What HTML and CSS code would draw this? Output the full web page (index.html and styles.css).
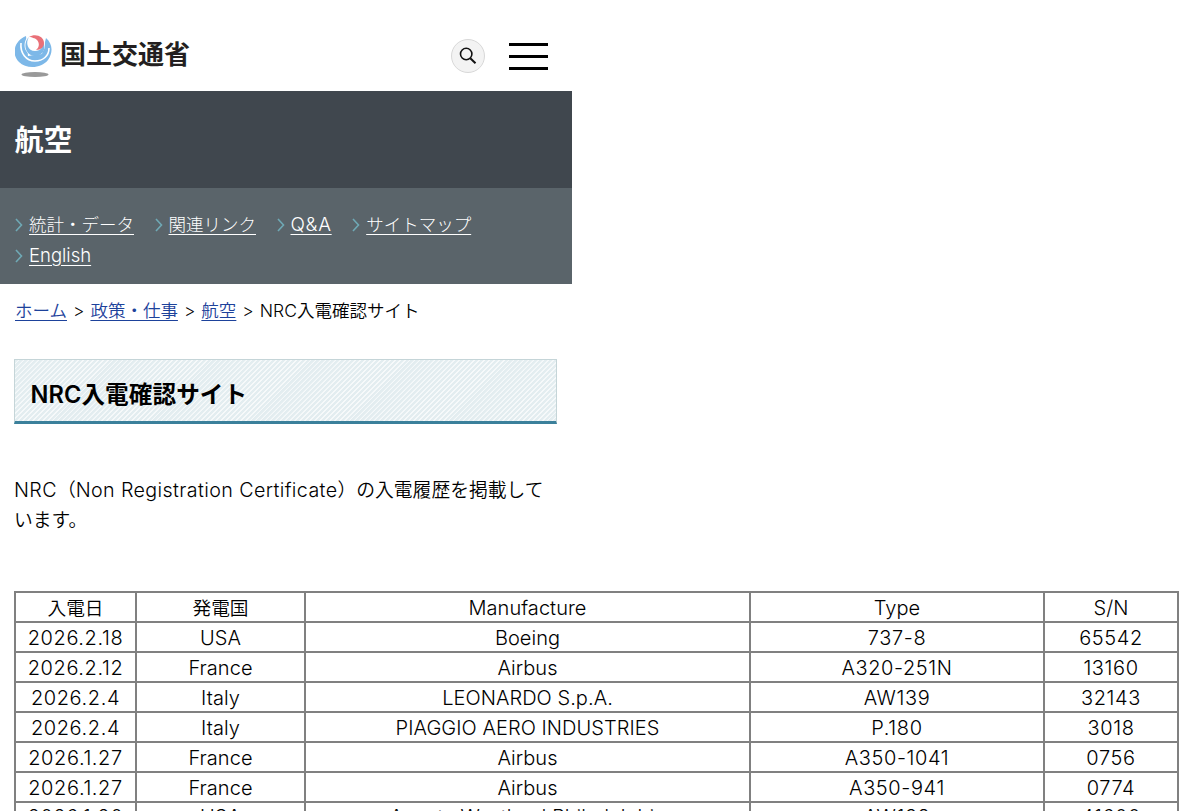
FILE: index.html
```html
<!DOCTYPE html>
<html lang="ja">
<head>
    <meta charset="UTF-8">
    <meta name="viewport" content="width=device-width, initial-scale=1.0">
    <title>航空:NRC入電確認サイト - 国土交通省</title>
    <link rel="stylesheet" href="styles.css">
</head>
<body>
    <div class="wrapper">
        <header class="header">
            <a class="logo" href="#">
                <svg class="logo-mark" width="38" height="44" viewBox="0 0 38 44">
                    <ellipse cx="20" cy="40.5" rx="13.5" ry="2.6" fill="#999"/>
                    <path d="M11 2C-1 7-4 20 4 28c7 7 22 7 29-2 5-7 5-16-2-22l-4 16-14 2Z" fill="#7db8e8"/>
                    <path d="M14 2C7 7 8 21 19 21c9 0 14-8 9-16-3-4-9-5-14-3Z" fill="#fff"/>
                    <path d="M14 3c-4 6-1 14 6 14 6 0 9-5 8-9 4 7-1 14-8 14C11 22 7 10 14 3Z" fill="#7db8e8"/>
                    <path d="M6 9c-1 10 5 18 14 18 8 0 14-5 14-13" fill="none" stroke="#fff" stroke-width="1.6"/>
                    <path d="M14 3c6-4 15-1 15 6 0 4-3 7-8 7 5-4 3-11-3-12-1-1-2-1-4-1Z" fill="#e97078"/>
                </svg>
                <span class="logo-text">国土交通省</span>
            </a>
            <div class="header-buttons">
                <button class="search" aria-label="検索">
                    <svg width="18" height="18" viewBox="0 0 18 18" fill="none" stroke="#111" stroke-width="1.6">
                        <circle cx="7.2" cy="7" r="5.7"/>
                        <path d="M11.3 11.2L16.5 16.3" stroke-width="2"/>
                    </svg>
                </button>
                <button class="menu" aria-label="メニュー"><i></i><i></i><i></i></button>
            </div>
        </header>
        <div class="category">航空</div>
        <ul class="local-nav">
            <li><svg width="8" height="14" viewBox="0 0 8 14"><path d="M1 1l5.500 6L1 13"/></svg><a href="#">統計・データ</a></li>
            <li><svg width="8" height="14" viewBox="0 0 8 14"><path d="M1 1l5.500 6L1 13"/></svg><a href="#">関連リンク</a></li>
            <li><svg width="8" height="14" viewBox="0 0 8 14"><path d="M1 1l5.500 6L1 13"/></svg><a href="#" class="qa">Q&amp;A</a></li>
            <li><svg width="8" height="14" viewBox="0 0 8 14"><path d="M1 1l5.500 6L1 13"/></svg><a href="#">サイトマップ</a></li>
            <li><svg width="8" height="14" viewBox="0 0 8 14"><path d="M1 1l5.500 6L1 13"/></svg><a href="#" class="english">English</a></li>
        </ul>
        <div class="breadcrumb">
            <a href="#">ホーム</a><span class="sep">&gt;</span><a href="#">政策・仕事</a><span class="sep">&gt;</span><a href="#">航空</a><span class="sep">&gt;</span><span>NRC入電確認サイト</span>
        </div>
        <h1 class="title">NRC入電確認サイト</h1>
        <p class="lead"><span class="latin">NRC</span>（<span class="latin">Non Registration Certificate</span>）の入電履歴を掲載して<br>います。</p>
    </div>
    <table class="list">
        <colgroup>
            <col class="col-date"><col class="col-country"><col class="col-maker"><col class="col-type"><col class="col-sn">
        </colgroup>
        <tr><td class="ja">入電日</td><td class="ja">発電国</td><td>Manufacture</td><td>Type</td><td>S/N</td></tr>
        <tr><td class="num">2026.2.18</td><td>USA</td><td>Boeing</td><td class="num">737-8</td><td class="num">65542</td></tr>
        <tr><td class="num">2026.2.12</td><td>France</td><td>Airbus</td><td class="num">A320-251N</td><td class="num">13160</td></tr>
        <tr><td class="num">2026.2.4</td><td>Italy</td><td>LEONARDO S.p.A.</td><td class="num">AW139</td><td class="num">32143</td></tr>
        <tr><td class="num">2026.2.4</td><td>Italy</td><td>PIAGGIO AERO INDUSTRIES</td><td class="num">P.180</td><td class="num">3018</td></tr>
        <tr><td class="num">2026.1.27</td><td>France</td><td>Airbus</td><td class="num">A350-1041</td><td class="num">0756</td></tr>
        <tr><td class="num">2026.1.27</td><td>France</td><td>Airbus</td><td class="num">A350-941</td><td class="num">0774</td></tr>
        <tr class="last"><td class="num">2026.1.20</td><td>USA</td><td>Agusta Westland Philadelphia</td><td class="num">AW139</td><td class="num">41600</td></tr>
    </table>
</body>
</html>
```
FILE: styles.css
```css
* {
    box-sizing: border-box;
}
html {
    overflow: hidden;
}
body {
    margin: 0;
    height: 811px;
    overflow: hidden;
    background: #fff;
    color: #000;
    font-family: Inter, "Noto Sans CJK JP", sans-serif;
    font-size: 19px;
    font-weight: 350;
}
.wrapper {
    width: 572px;
}
.header {
    display: flex;
    justify-content: space-between;
    height: 91px;
    padding: 34px 24px 0 15px;
}
.logo {
    display: flex;
    gap: 7px;
    color: #231f20;
    text-decoration: none;
}
.logo-text {
    font-family: "Noto Sans CJK JP", sans-serif;
    font-size: 26px;
    font-weight: 700;
    line-height: 38px;
}
.header-buttons {
    display: flex;
    gap: 24px;
    padding-top: 5px;
}
.search {
    display: flex;
    align-items: center;
    justify-content: center;
    width: 34px;
    height: 34px;
    padding: 0;
    border: 1px solid #d8d8d8;
    border-radius: 50%;
    background: #f3f3f3;
}
.menu {
    display: flex;
    flex-direction: column;
    gap: 9px;
    width: 39px;
    padding: 4px 0 0;
    border: none;
    background: none;
}
.menu i {
    width: 39px;
    height: 3px;
    background: #000;
}
.category {
    height: 97px;
    padding-left: 14.5px;
    background: #40474e;
    color: #fff;
    font-family: "Noto Sans CJK JP", sans-serif;
    font-size: 29px;
    font-weight: 700;
    line-height: 95px;
}
.local-nav {
    display: flex;
    flex-wrap: wrap;
    align-content: flex-start;
    column-gap: 20.5px;
    height: 96px;
    margin: 0;
    padding: 21px 15px 0;
    list-style: none;
    background: #5a646a;
    font-size: 17.5px;
    font-weight: 300;
    line-height: 31px;
}
.local-nav li {
    display: flex;
    align-items: center;
    gap: 6px;
}
.local-nav svg {
    fill: none;
    stroke: #6fa9b5;
    stroke-width: 1.6;
}
.local-nav a {
    color: #fff;
    text-underline-offset: 3px;
}
.local-nav .qa {
    font-size: 19px;
    letter-spacing: 0.7px;
}
.local-nav .english {
    font-size: 18.5px;
}
.breadcrumb {
    padding: 13px 15px 0;
    height: 75px;
    font-size: 17.5px;
    line-height: 27px;
    white-space: nowrap;
}
.breadcrumb a {
    color: #1d429b;
    text-underline-offset: 3px;
}
.sep {
    margin: 0 6px;
}
.title {
    width: 543px;
    height: 65px;
    margin: 0 0 0 14.4px;
    padding: 0 15px;
    border: 1px solid #c5d5d8;
    border-bottom: 3px solid #3b809b;
    background: repeating-linear-gradient(135deg, #e3edf0 0, #e3edf0 2px, #f6f9fa 2.500px, #f6f9fa 3.500px);
    color: #000;
    font-size: 23.6px;
    font-weight: 600;
    letter-spacing: 0.1px;
    line-height: 69px;
}
.lead {
    height: 112px;
    margin: 0;
    padding: 51px 0 0 14px;
    font-size: 18.8px;
    line-height: 30px;
    white-space: nowrap;
}
.latin {
    font-size: 19.7px;
    font-weight: 300;
    letter-spacing: 0.38px;
}
.list {
    width: 1164px;
    margin: 55px 0 0 14px;
    border-collapse: collapse;
    table-layout: fixed;
    text-align: center;
    font-size: 20px;
    font-weight: 300;
    letter-spacing: 0.05px;
}
.list tr {
    height: 30px;
}
.list td {
    padding: 3px 0 0;
    border: 2px solid #808080;
    line-height: 25px;
    white-space: nowrap;
}
.list .ja {
    font-size: 18.7px;
    font-weight: 350;
    letter-spacing: 0;
}
.list .num {
    letter-spacing: 0.6px;
}
.list .last td {
    padding: 1px 0 0;
}
.col-date {
    width: 121px;
}
.col-country {
    width: 169px;
}
.col-maker {
    width: 445px;
}
.col-type {
    width: 294px;
}
.col-sn {
    width: 134px;
}
```
